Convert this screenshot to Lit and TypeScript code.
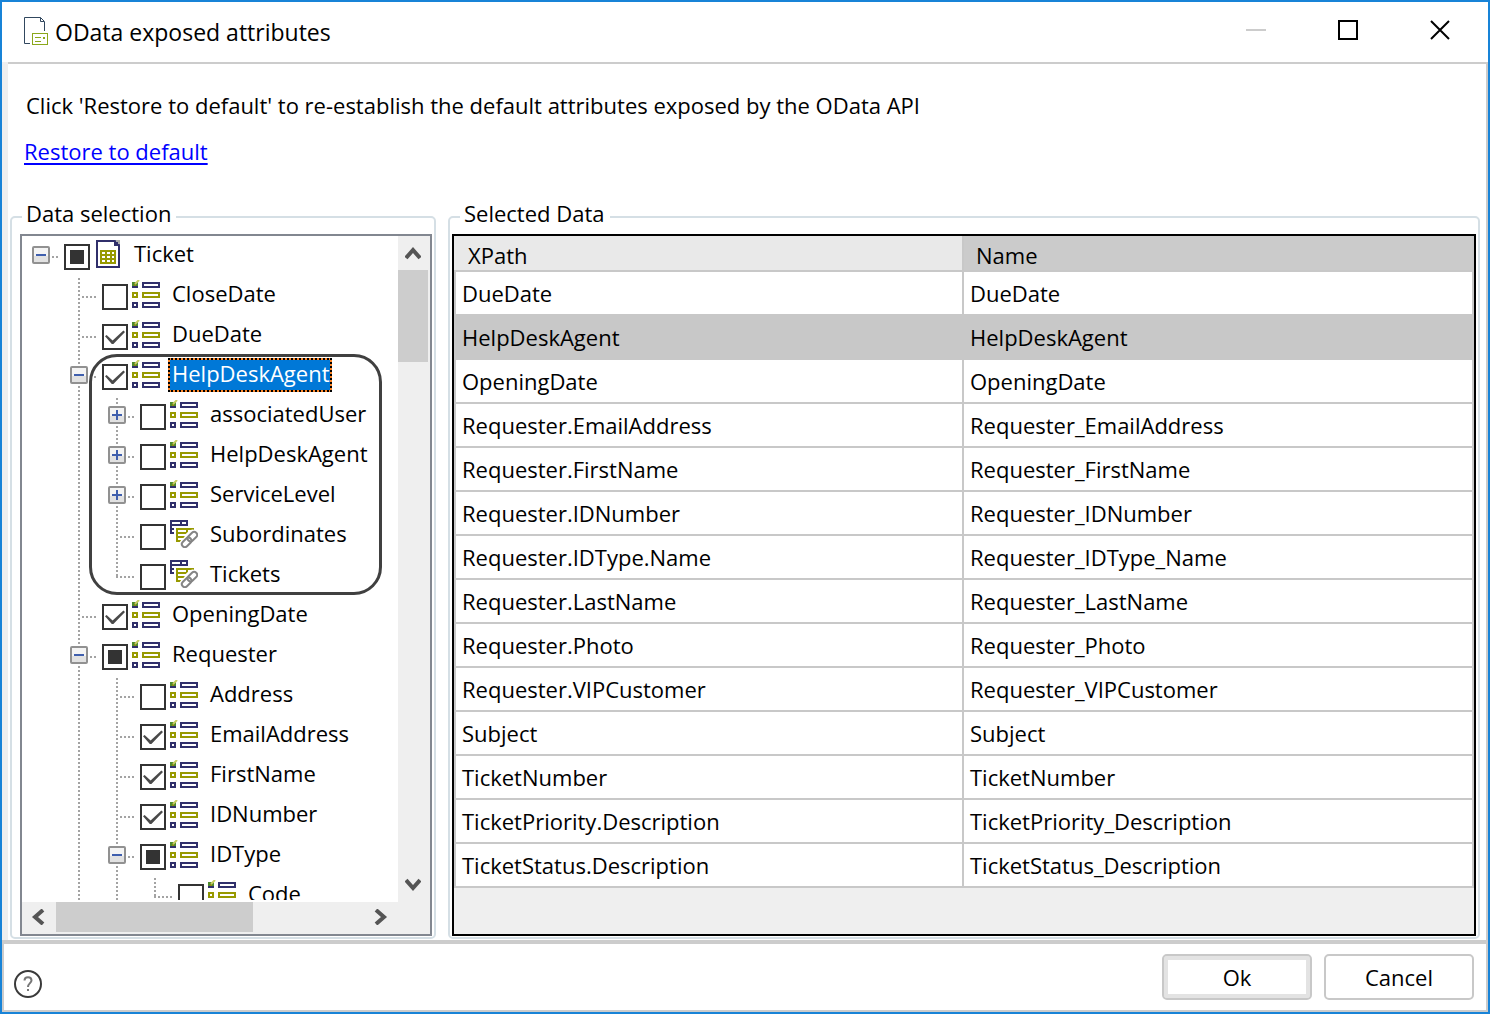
import { LitElement, html, css, svg, nothing } from "lit";
import { customElement, property, state } from "lit/decorators.js";
import { classMap } from "lit/directives/class-map.js";

type Guide = "none" | "line" | "tee" | "end" | "minus" | "minus-root" | "plus";
type Check = "off" | "on" | "mixed";
type Kind = "entity" | "attribute" | "collection";

interface TreeItem {
  label: string;
  guides: Guide[];
  check: Check;
  kind: Kind;
}

const item = (label: string, guides: Guide[], check: Check = "off", kind: Kind = "attribute"): TreeItem => ({
  label,
  guides,
  check,
  kind,
});

const TREE: TreeItem[] = [
  item("Ticket", ["minus-root"], "mixed", "entity"),
  item("CloseDate", ["none", "tee"]),
  item("DueDate", ["none", "tee"], "on"),
  item("HelpDeskAgent", ["none", "minus"], "on"),
  item("associatedUser", ["none", "line", "plus"]),
  item("HelpDeskAgent", ["none", "line", "plus"]),
  item("ServiceLevel", ["none", "line", "plus"]),
  item("Subordinates", ["none", "line", "tee"], "off", "collection"),
  item("Tickets", ["none", "line", "end"], "off", "collection"),
  item("OpeningDate", ["none", "tee"], "on"),
  item("Requester", ["none", "minus"], "mixed"),
  item("Address", ["none", "line", "tee"]),
  item("EmailAddress", ["none", "line", "tee"], "on"),
  item("FirstName", ["none", "line", "tee"], "on"),
  item("IDNumber", ["none", "line", "tee"], "on"),
  item("IDType", ["none", "line", "minus"], "mixed"),
  item("Code", ["none", "line", "line", "end"]),
];

const PATHS = [
  "DueDate",
  "HelpDeskAgent",
  "OpeningDate",
  "Requester.EmailAddress",
  "Requester.FirstName",
  "Requester.IDNumber",
  "Requester.IDType.Name",
  "Requester.LastName",
  "Requester.Photo",
  "Requester.VIPCustomer",
  "Subject",
  "TicketNumber",
  "TicketPriority.Description",
  "TicketStatus.Description",
];

const dots = (x1: number, y1: number, x2: number, y2: number) =>
  svg`<line x1=${x1} y1=${y1} x2=${x2} y2=${y2} stroke="#a3a3a3" stroke-width="2" stroke-dasharray="2 2"/>`;

const guideLines = (g: Guide) => {
  switch (g) {
    case "line":
      return dots(19, 2, 19, 40);
    case "tee":
      return svg`${dots(19, 2, 19, 40)}${dots(22, 21, 38, 21)}`;
    case "end":
      return svg`${dots(19, 2, 19, 20)}${dots(18, 21, 38, 21)}`;
    case "minus-root":
      return dots(30, 21, 38, 21);
    case "minus":
    case "plus":
      return svg`${dots(19, 2, 19, 8)}${dots(19, 30, 19, 40)}${dots(30, 21, 38, 21)}`;
    default:
      return nothing;
  }
};

const expander = (plus: boolean) => svg`
  <rect x="11" y="11" width="16" height="16" rx="1" fill="#f4f4f4" stroke="#919191" stroke-width="2"/>
  <rect x="12" y="20" width="14" height="6" fill="#e2e2e2"/>
  <rect x="14" y="18" width="10" height="2" fill="#3f5fae"/>
  ${plus ? svg`<rect x="18" y="14" width="2" height="10" fill="#3f5fae"/>` : nothing}`;

const icons: Record<Kind, unknown> = {
  attribute: html`<svg class="icon" viewBox="0 0 28 28" aria-hidden="true">
    <g fill="none" stroke="#302f6b" stroke-width="2">
      <rect x="11" y="3" width="16" height="4" />
      <rect x="11" y="23" width="16" height="4" />
      <rect x="1" y="23" width="4" height="4" />
    </g>
    <g fill="none" stroke="#979900" stroke-width="2">
      <rect x="11" y="13" width="16" height="4" />
      <rect x="1" y="13" width="4" height="4" />
    </g>
    <rect x="0" y="2" width="6" height="4" fill="#4f8a2c" />
    <rect x="0" y="6" width="6" height="2" fill="#302f6b" />
    <rect x="2" y="4" width="2" height="2" fill="#8a8a14" />
    <path d="M3 4L7 0" stroke="#c8cc62" stroke-width="2" />
  </svg>`,
  entity: html`<svg class="icon" viewBox="0 0 28 28" aria-hidden="true">
    <path d="M3 1H21L25 5V27H3Z" fill="#fff" stroke="#302f6b" stroke-width="2" />
    <rect x="20" y="2" width="4" height="4" fill="#302f6b" />
    <path d="M22 0H26V4H24V2H22Z" fill="#a9a9a9" />
    <rect x="6" y="10" width="16" height="14" fill="#979900" />
    ${[12, 16, 20].map((y) => [8, 13, 18].map((x) => svg`<rect x=${x} y=${y} width=${x > 13 ? 2 : 3} height="2" fill="#fff"/>`))}
  </svg>`,
  collection: html`<svg class="icon" viewBox="0 0 28 28" aria-hidden="true">
    <g fill="none" stroke="#302f6b" stroke-width="2">
      <rect x="1" y="1" width="16" height="4" />
      <path d="M11 2V4M1 5V13H4M1 9H4" />
    </g>
    <g fill="none" stroke="#979900" stroke-width="2">
      <path d="M7 9H23V13H7ZM17 10V12M7 13V21H12M7 17H15" />
    </g>
    <g fill="none" stroke="#fff" stroke-width="5">
      <rect x="17" y="13" width="10" height="6" rx="3" transform="rotate(-45 22 17)" />
      <rect x="11" y="19" width="10" height="6" rx="3" transform="rotate(-45 17 22)" />
    </g>
    <g fill="none" stroke="#858585" stroke-width="2">
      <rect x="17" y="14" width="11" height="6" rx="3" transform="rotate(-45 22 17)" />
      <rect x="11" y="19" width="11" height="6" rx="3" transform="rotate(-45 17 22)" />
    </g>
  </svg>`,
};

@customElement("tree-row")
export class TreeRow extends LitElement {
  static styles = css`
    :host {
      display: block;
    }
    .row {
      display: flex;
      align-items: flex-start;
      height: 40px;
    }
    .guide {
      flex: none;
      width: 38px;
      height: 40px;
      padding: 0;
      border: 0;
      background: none;
    }
    .guide svg,
    .icon {
      display: block;
    }
    .check {
      appearance: none;
      flex: none;
      display: grid;
      place-items: center;
      box-sizing: border-box;
      width: 26px;
      height: 26px;
      margin: 8px 4px 0;
      border: 2px solid #333;
      background: #fff;
    }
    .check:checked::before {
      content: "";
      width: 20px;
      height: 14px;
      background: #4a4a4a;
      clip-path: polygon(0 45%, 8% 36%, 38% 75%, 92% 4%, 100% 14%, 42% 100%, 34% 100%);
    }
    .check:indeterminate::before {
      content: "";
      width: 14px;
      height: 14px;
      background: #333;
    }
    .icon {
      flex: none;
      width: 28px;
      height: 28px;
      margin: 4px 8px 0 0;
    }
    .label {
      box-sizing: border-box;
      height: 34px;
      margin-top: 2px;
      padding: 0 2px;
      border: 2px solid transparent;
      line-height: 26px;
      white-space: nowrap;
    }
    .label.selected {
      border: 2px dotted #000;
      background: linear-gradient(#0078d7, #0078d7) padding-box, linear-gradient(#ff8728, #ff8728) border-box;
      color: #fff;
      padding-right: 0;
    }
  `;

  @property({ attribute: false }) item!: TreeItem;
  @property({ type: Boolean }) selected = false;

  render() {
    const { label, guides, check, kind } = this.item;
    return html`<div class="row">
      ${guides.map((g) => {
        const opens = g === "plus" || g.startsWith("minus");
        const art = html`<svg width="38" height="40" viewBox="0 0 38 40" aria-hidden="true">
          ${guideLines(g)}${opens ? expander(g === "plus") : nothing}
        </svg>`;
        return opens
          ? html`<button class="guide" type="button" aria-label="Toggle ${label}" aria-expanded=${g !== "plus"}>${art}</button>`
          : html`<span class="guide">${art}</span>`;
      })}
      <input id="check" class="check" type="checkbox" .checked=${check === "on"} .indeterminate=${check === "mixed"} />
      ${icons[kind]}
      <label for="check" class=${classMap({ label: true, selected: this.selected })}>${label}</label>
    </div>`;
  }
}

const chevron = (d: string) => html`<svg width="16" height="16" viewBox="0 0 16 16" aria-hidden="true">
  <path d=${d} fill="none" stroke="#555" stroke-width="4" />
</svg>`;

@customElement("app-root")
export class AppRoot extends LitElement {
  static styles = css`
    :host {
      display: block;
      font: 22px "Open Sans", "Noto Sans", sans-serif;
      color: #000;
    }
    * {
      box-sizing: border-box;
    }
    button {
      font: inherit;
      color: inherit;
      padding: 0;
      border: 0;
      background: none;
    }
    .window {
      display: flex;
      flex-direction: column;
      height: 100vh;
      min-height: 480px;
      border: 2px solid #1883d7;
      background: #fff;
    }
    .titlebar {
      display: flex;
      align-items: center;
      height: 60px;
      flex: none;
      padding: 0 2px 0 22px;
    }
    .title {
      flex: 1;
      margin: 0;
      padding-left: 6px;
      font-size: 23px;
      font-weight: 400;
      line-height: 32px;
    }
    .caption {
      display: grid;
      place-items: center;
      align-self: flex-start;
      width: 92px;
      height: 56px;
    }
    .frame {
      flex: 1;
      min-height: 0;
      display: flex;
      flex-direction: column;
      border-left: 6px solid #efefef;
    }
    .body {
      flex: 1;
      min-height: 0;
      display: flex;
      flex-direction: column;
      padding: 26px 6px 1px 2px;
      border: solid #ccc;
      border-width: 2px 2px 0 0;
    }
    .message {
      margin: 0 0 16px 16px;
      line-height: 30px;
      white-space: nowrap;
    }
    .restore {
      align-self: flex-start;
      margin: 0 0 37px 14px;
      line-height: 30px;
      color: #00f;
      text-decoration: underline 2px;
      text-underline-offset: 3px;
      text-decoration-skip-ink: none;
    }
    .panels {
      flex: 1;
      min-height: 0;
      display: grid;
      grid-template-columns: minmax(0, 426fr) minmax(0, 1032fr);
      grid-template-rows: minmax(0, 1fr);
      gap: 12px;
    }
    .group {
      display: flex;
      flex-direction: column;
      min-width: 0;
      min-height: 0;
      margin: 0;
      padding: 3px 2px 1px 8px;
      border: 2px solid #d5dfe5;
      border-radius: 5px;
    }
    .group.wide {
      padding-left: 2px;
    }
    .legend {
      height: 28px;
      margin-left: 2px;
      padding: 0 5px 0 4px;
      line-height: 20px;
    }
    .wide .legend {
      margin-left: 8px;
    }
    .tree {
      flex: 1;
      min-height: 0;
      display: grid;
      grid-template-columns: minmax(0, 1fr) 32px;
      grid-template-rows: minmax(0, 1fr) 32px;
      border: 2px solid #828790;
      background: #efefef;
    }
    .rows {
      position: relative;
      overflow: hidden;
      border-bottom: 2px solid #fff;
      background: #fff;
    }
    .marker {
      position: absolute;
      left: 67px;
      top: 118px;
      width: 293px;
      height: 241px;
      border: 3px solid #404040;
      border-radius: 28px;
      pointer-events: none;
    }
    .bar {
      display: flex;
    }
    .bar.vertical {
      flex-direction: column;
    }
    .arrow {
      display: grid;
      place-items: center;
      flex: none;
      width: 34px;
      height: 30px;
    }
    .vertical .arrow {
      width: 30px;
      height: 34px;
    }
    .track {
      flex: 1;
      display: flex;
    }
    .vertical .track {
      flex-direction: column;
    }
    .thumb {
      width: 64%;
      height: 30px;
      background: #cdcdcd;
    }
    .vertical .thumb {
      width: 30px;
      height: 92px;
    }
    .grid {
      flex: 1;
      min-height: 0;
      overflow: hidden;
      border: 2px solid #000;
      background: #efefef;
    }
    .table {
      width: 100%;
      table-layout: fixed;
      border-collapse: separate;
      border-spacing: 0;
      line-height: 30px;
    }
    .head {
      height: 36px;
      padding: 4px 0 0 14px;
      border: solid #c8c8c8;
      border-width: 0 2px 2px 0;
      background: #e9e9e9;
      text-align: left;
      font-weight: 400;
      line-height: 28px;
    }
    .head.sorted {
      padding-left: 12px;
      background: #cbcbcb;
    }
    .cell {
      height: 44px;
      padding: 0 0 0 6px;
      border: solid #c8c8c8;
      border-width: 0 2px 2px 0;
      background: #fff;
    }
    .cell:first-child {
      border-left-width: 2px;
    }
    .current .cell {
      background: #c8c8c8;
    }
    .footer {
      flex: none;
      display: flex;
      align-items: flex-start;
      gap: 12px;
      height: 72px;
      padding: 10px 12px 0 10px;
      border: 2px solid #ccc;
      border-top-width: 4px;
    }
    .help {
      margin: 16px auto 0 0;
      width: 28px;
      height: 28px;
    }
    .help svg {
      display: block;
    }
    .action {
      width: 150px;
      height: 46px;
      border: 2px solid #c8c8c8;
      border-radius: 5px;
      background: #fff;
    }
    .action.default {
      box-shadow: inset 0 0 0 4px #e3e3e3;
    }
  `;

  @state() private current = 1;

  render() {
    return html`<div class="window">
      <header class="titlebar">
        <svg width="25" height="30" viewBox="0 0 25 30" aria-hidden="true">
          <path d="M6 26.5H.5V.5H16.5L20.5 4.5V14M16.5 .5V4.5H20" fill="none" stroke="#31475e" />
          <rect x="8.5" y="16.5" width="15" height="11" fill="#fff" stroke="#8ba71b" />
          <path d="M11 20.5H17M11 24.5H17" stroke="#8ba71b" />
          <rect x="19" y="20" width="2" height="2" fill="#8ba71b" />
        </svg>
        <h1 class="title">OData exposed attributes</h1>
        <button class="caption" type="button" aria-label="Minimize" disabled>
          <svg width="20" height="20" viewBox="0 0 20 20"><rect y="9" width="20" height="2" fill="#ccc" /></svg>
        </button>
        <button class="caption" type="button" aria-label="Maximize">
          <svg width="20" height="20" viewBox="0 0 20 20">
            <rect x="1" y="1" width="18" height="18" fill="none" stroke="#000" stroke-width="2" />
          </svg>
        </button>
        <button class="caption" type="button" aria-label="Close">
          <svg width="20" height="20" viewBox="0 0 20 20">
            <path d="M1 1L19 19M19 1L1 19" stroke="#000" stroke-width="2" />
          </svg>
        </button>
      </header>
      <div class="frame">
        <main class="body">
          <p class="message">Click 'Restore to default' to re-establish the default attributes exposed by the OData API</p>
          <a class="restore" href="#restore">Restore to default</a>
          <div class="panels">
            <fieldset class="group">
              <legend class="legend">Data selection</legend>
              <div class="tree">
                <div class="rows">
                  ${TREE.map((t, i) => html`<tree-row .item=${t} ?selected=${i === 3}></tree-row>`)}
                  <div class="marker"></div>
                </div>
                <div class="bar vertical">
                  <button class="arrow" type="button" aria-label="Scroll up">${chevron("M1 13L8 5L15 13")}</button>
                  <div class="track"><div class="thumb"></div></div>
                  <button class="arrow" type="button" aria-label="Scroll down">${chevron("M1 3L8 11L15 3")}</button>
                </div>
                <div class="bar">
                  <button class="arrow" type="button" aria-label="Scroll left">${chevron("M12 1L4 8L12 15")}</button>
                  <div class="track"><div class="thumb"></div></div>
                  <button class="arrow" type="button" aria-label="Scroll right">${chevron("M3 1L11 8L3 15")}</button>
                </div>
              </div>
            </fieldset>
            <fieldset class="group wide">
              <legend class="legend">Selected Data</legend>
              <div class="grid">
                <table class="table">
                  <thead>
                    <tr>
                      <th class="head" scope="col">XPath</th>
                      <th class="head sorted" scope="col">Name</th>
                    </tr>
                  </thead>
                  <tbody>
                    ${PATHS.map(
                      (p, i) => html`<tr class=${classMap({ current: i === this.current })} @click=${() => (this.current = i)}>
                        <td class="cell">${p}</td>
                        <td class="cell">${p.replaceAll(".", "_")}</td>
                      </tr>`
                    )}
                  </tbody>
                </table>
              </div>
            </fieldset>
          </div>
        </main>
      </div>
      <footer class="footer">
        <button class="help" type="button" aria-label="Help">
          <svg width="28" height="28" viewBox="0 0 28 28">
            <circle cx="14" cy="14" r="13" fill="none" stroke="#3a3a3a" stroke-width="2" />
            <path d="M10.5 10.5C10.5 6 17.5 6 17.5 10.5C17.5 13 14 13.5 14 17" fill="none" stroke="#777" stroke-width="2" />
            <rect x="13" y="19" width="2" height="2" fill="#777" />
          </svg>
        </button>
        <button class="action default" type="button">Ok</button>
        <button class="action" type="button">Cancel</button>
      </footer>
    </div>`;
  }
}
